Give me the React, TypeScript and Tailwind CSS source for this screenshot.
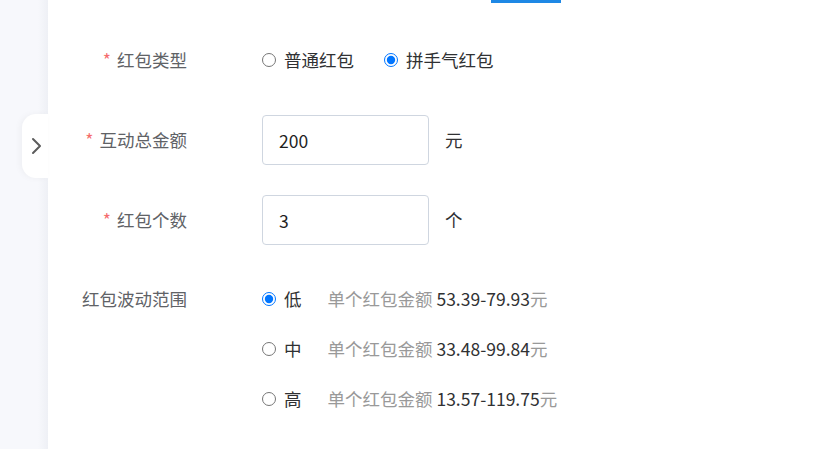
import { useState } from "react";

const font = { fontFamily: '"Noto Sans CJK SC", "Noto Sans", sans-serif' };

const Label = ({ text, required }: { text: string; required?: boolean }) => (
  <div className="w-[139px] shrink-0 text-right text-[17.5px] text-[#606266]">
    {required && <span className="mr-[6px] text-[#f56c6c]">*</span>}
    {text}
  </div>
);

const Radio = ({
  checked,
  onChange,
  children,
}: {
  checked: boolean;
  onChange: () => void;
  children: React.ReactNode;
}) => (
  <label className="flex cursor-pointer items-center">
    <input
      type="radio"
      checked={checked}
      onChange={onChange}
      className="m-0 h-[14px] w-[14px]"
    />
    <span className="ml-[8px] text-[17.5px] text-[#303133]">{children}</span>
  </label>
);

const ranges = [
  { key: "low", name: "低", range: "53.39-79.93" },
  { key: "mid", name: "中", range: "33.48-99.84" },
  { key: "high", name: "高", range: "13.57-119.75" },
];

export default function App() {
  const [type, setType] = useState("lucky");
  const [level, setLevel] = useState("low");
  const [amount, setAmount] = useState("200");
  const [count, setCount] = useState("3");

  return (
    <div className="flex h-[449px] w-[819px] overflow-hidden bg-white" style={font}>
      <div className="relative w-[48px] shrink-0 bg-[#f7f8fc]">
        <div className="absolute right-0 top-0 h-full w-[10px] bg-gradient-to-r from-[#f7f8fc] to-[#eef0f5]" />
        <div className="absolute right-0 top-[114px] flex h-[64px] w-[26px] items-center justify-center rounded-l-[14px] bg-white shadow-[-2px_0_6px_rgba(0,0,0,0.04)]">
          <svg width="11" height="18" viewBox="0 0 11 18" fill="none" className="ml-[3px]">
            <path d="M2 2l7 7-7 7" stroke="#5c5c5c" strokeWidth="2" strokeLinecap="round" strokeLinejoin="round" />
          </svg>
        </div>
      </div>

      <div className="flex-1">
        <div className="flex h-[35px] items-start">
          <div className="ml-[443px] h-[3px] w-[70px] bg-[#1e88e5]" />
        </div>

        <div className="flex h-[50px] items-center">
          <Label text="红包类型" required />
          <div className="ml-[75px] flex items-center gap-[30px]">
            <Radio checked={type === "normal"} onChange={() => setType("normal")}>
              普通红包
            </Radio>
            <Radio checked={type === "lucky"} onChange={() => setType("lucky")}>
              拼手气红包
            </Radio>
          </div>
        </div>

        <div className="mt-[30px] flex h-[50px] items-center">
          <Label text="互动总金额" required />
          <input
            value={amount}
            onChange={(e) => setAmount(e.target.value)}
            className="ml-[75px] h-[50px] w-[167px] rounded-[4px] border border-[#cfd6e0] px-[16px] text-[17.5px] text-[#1f1f1f] outline-none"
          />
          <span className="ml-[16px] text-[17.5px] text-[#303133]">元</span>
        </div>

        <div className="mt-[30px] flex h-[50px] items-center">
          <Label text="红包个数" required />
          <input
            value={count}
            onChange={(e) => setCount(e.target.value)}
            className="ml-[75px] h-[50px] w-[167px] rounded-[4px] border border-[#cfd6e0] px-[16px] text-[17.5px] text-[#1f1f1f] outline-none"
          />
          <span className="ml-[16px] text-[17.5px] text-[#303133]">个</span>
        </div>

        <div className="mt-[29px] flex items-start">
          <div className="flex h-[50px] items-center">
            <Label text="红包波动范围" />
          </div>
          <div className="ml-[75px] flex flex-col">
            {ranges.map((r) => (
              <div key={r.key} className="flex h-[50px] items-center">
                <Radio checked={level === r.key} onChange={() => setLevel(r.key)}>
                  {r.name}
                </Radio>
                <span className="ml-[26px] text-[17.5px] text-[#999]">
                  单个红包金额 <span className="text-[#303133]">{r.range}</span>元
                </span>
              </div>
            ))}
          </div>
        </div>
      </div>
    </div>
  );
}
